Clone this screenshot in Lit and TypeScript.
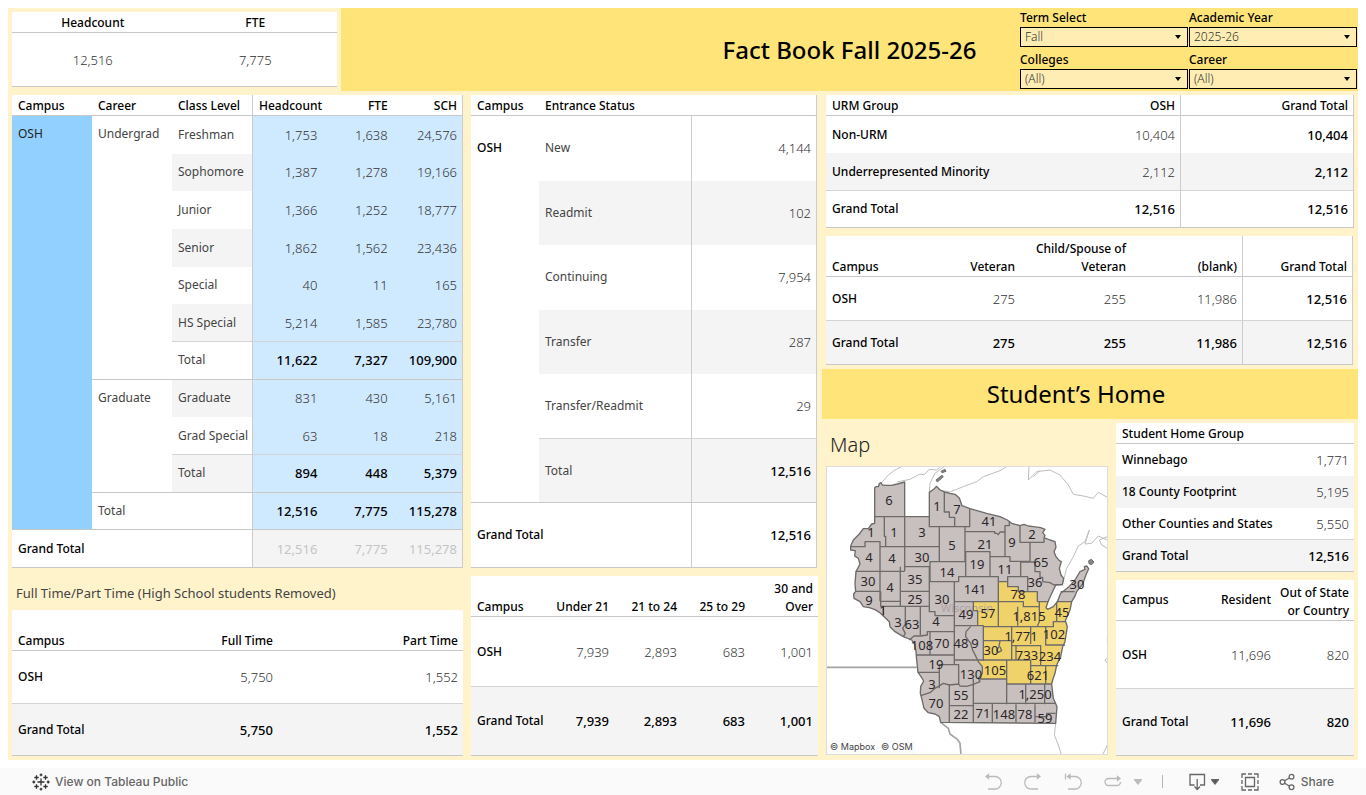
import { LitElement, html, svg, css } from "lit";
import { customElement } from "lit/decorators.js";

const tableStyles = css`
  :host { display: block; }
  * { box-sizing: border-box; }
  table {
    width: 100%;
    table-layout: fixed;
    border-collapse: separate;
    border-spacing: 0;
    background: #fff;
    font-size: 13px;
    line-height: 18px;
    color: #333;
    font-weight: 300;
  }
  th, td { padding: 0 5px 0 6px; text-align: right; vertical-align: middle; }
  th { font-size: 12px; font-weight: 500; color: #000; }
  thead th { vertical-align: bottom; border-bottom: 1px solid #c8c8c8; }
  .l { text-align: left; white-space: nowrap; }
  .c { text-align: center; }
  .light { font-weight: 400; color: #444; }
  .top { vertical-align: top; }
  .mid { vertical-align: middle; }
  .strong { font-weight: 500; color: #000; }
  .band { background: #f4f4f4; }
  .rule { border-bottom: 1px solid #d4d4d4; }
  .end { border-bottom: 1px solid #c8c8c8; }
  .bl { border-left: 1px solid #cccccc; }
  .br { border-right: 1px solid #cccccc; }
`;

@customElement("kpi-table")
class KpiTable extends LitElement {
  static styles = [tableStyles, css`
    thead tr { height: 21px; }
    tbody tr { height: 54px; }
    .c { padding: 0 6px 0 5px; }
  `];
  render() {
    return html`<table>
      <thead><tr><th class="c" scope="col">Headcount</th><th class="c" scope="col">FTE</th></tr></thead>
      <tbody><tr><td class="c end">12,516</td><td class="c end">7,775</td></tr></tbody>
    </table>`;
  }
}

interface LevelRow {
  label: string;
  values: string[];
  career?: string;
  span?: number;
  band?: boolean;
  total?: boolean;
  line?: string;
}

const levels: LevelRow[] = [
  { career: "Undergrad", span: 7, label: "Freshman", values: ["1,753", "1,638", "24,576"] },
  { label: "Sophomore", values: ["1,387", "1,278", "19,166"], band: true },
  { label: "Junior", values: ["1,366", "1,252", "18,777"] },
  { label: "Senior", values: ["1,862", "1,562", "23,436"], band: true },
  { label: "Special", values: ["40", "11", "165"] },
  { label: "HS Special", values: ["5,214", "1,585", "23,780"], band: true, line: "rule" },
  { label: "Total", values: ["11,622", "7,327", "109,900"], total: true, line: "end" },
  { career: "Graduate", span: 3, label: "Graduate", values: ["831", "430", "5,161"], band: true },
  { label: "Grad Special", values: ["63", "18", "218"], line: "rule" },
  { label: "Total", values: ["894", "448", "5,379"], band: true, total: true, line: "end" },
];

@customElement("level-table")
class LevelTable extends LitElement {
  static styles = [tableStyles, css`
    table { height: 473px; }
    col:nth-child(-n+3) { width: 80px; }
    thead tr { height: 21px; }
    tbody tr { height: 37px; }
    .campus { background: #92d0ff; color: #222; font-weight: 400; }
    .top { padding-top: 9px; }
    .m { background: #cfe9ff; }
    .faded { color: #c4c4c4; font-weight: 400; }
  `];
  render() {
    const cells = (v: string[], cls: string) =>
      v.map((x, i) => html`<td class="${cls} ${i === 0 ? "bl" : ""} ${i === 2 ? "br" : ""}">${x}</td>`);
    return html`<table>
      <colgroup><col /><col /><col /><col /><col /><col /></colgroup>
      <thead><tr>
        <th class="l" scope="col">Campus</th><th class="l" scope="col">Career</th><th class="l" scope="col">Class Level</th>
        <th class="bl" scope="col">Headcount</th><th scope="col">FTE</th><th class="br" scope="col">SCH</th>
      </tr></thead>
      <tbody>
        ${levels.map((r, i) => html`<tr>
          ${i === 0 ? html`<th class="l top campus end" scope="rowgroup" rowspan="11">OSH</th>` : ""}
          ${r.career ? html`<th class="l top light end" scope="rowgroup" rowspan=${r.span!}>${r.career}</th>` : ""}
          <th class="l light ${r.band ? "band" : ""} ${r.line ?? ""}" scope="row">${r.label}</th>
          ${cells(r.values, `m ${r.total ? "strong" : ""} ${r.line ?? ""}`)}
        </tr>`)}
        <tr><th class="l light end" scope="row" colspan="2">Total</th>${cells(["12,516", "7,775", "115,278"], "m strong end")}</tr>
        <tr><th class="l end" scope="row" colspan="3">Grand Total</th>${cells(["12,516", "7,775", "115,278"], "band faded end")}</tr>
      </tbody>
    </table>`;
  }
}

@customElement("entrance-table")
class EntranceTable extends LitElement {
  static styles = [tableStyles, css`
    :host { padding-right: 1px; }
    table { height: 473px; }
    col:nth-child(1) { width: 68px; }
    col:nth-child(2) { width: 152px; }
    thead tr { height: 21px; }
    tbody tr { height: 64px; }
    .top { padding-top: 23px; }
  `];
  render() {
    const rows: [string, string, string, string][] = [
      ["New", "4,144", "", ""],
      ["Readmit", "102", "band", ""],
      ["Continuing", "7,954", "", ""],
      ["Transfer", "287", "band", ""],
      ["Transfer/Readmit", "29", "rule", ""],
      ["Total", "12,516", "band end", "strong"],
    ];
    return html`<table>
      <colgroup><col /><col /><col /></colgroup>
      <thead><tr><th class="l" scope="col">Campus</th><th class="l" scope="col">Entrance Status</th><th class="br"></th></tr></thead>
      <tbody>
        ${rows.map((r, i) => html`<tr>
          ${i === 0 ? html`<th class="l top end" scope="rowgroup" rowspan="6">OSH</th>` : ""}
          <th class="l light ${r[2]}" scope="row">${r[0]}</th><td class="bl br ${r[2]} ${r[3]}">${r[1]}</td>
        </tr>`)}
        <tr><th class="l end" scope="row" colspan="2">Grand Total</th><td class="bl br end strong">12,516</td></tr>
      </tbody>
    </table>`;
  }
}

@customElement("status-table")
class StatusTable extends LitElement {
  static styles = [tableStyles, css`
    col:nth-child(1) { width: 81px; }
    thead tr { height: 41px; }
    tbody tr { height: 52px; }
    tbody tr:first-child { height: 53px; }
  `];
  render() {
    return html`<table>
      <colgroup><col /><col /><col /></colgroup>
      <thead><tr><th class="l" scope="col">Campus</th><th scope="col">Full Time</th><th scope="col">Part Time</th></tr></thead>
      <tbody>
        <tr><th class="l rule" scope="row">OSH</th><td class="rule">5,750</td><td class="rule">1,552</td></tr>
        <tr class="band"><th class="l end" scope="row">Grand Total</th><td class="end strong">5,750</td><td class="end strong">1,552</td></tr>
      </tbody>
    </table>`;
  }
}

@customElement("age-table")
class AgeTable extends LitElement {
  static styles = [tableStyles, css`
    col:nth-child(1) { width: 75px; }
    thead tr { height: 41px; }
    tbody tr { height: 70px; }
    tbody tr:last-child { height: 69px; }
  `];
  render() {
    return html`<table>
      <colgroup><col /><col /><col /><col /><col /></colgroup>
      <thead><tr><th class="l" scope="col">Campus</th><th scope="col">Under 21</th><th scope="col">21 to 24</th><th scope="col">25 to 29</th><th scope="col">30 and Over</th></tr></thead>
      <tbody>
        <tr><th class="l rule" scope="row">OSH</th>${["7,939", "2,893", "683", "1,001"].map((v) => html`<td class="rule">${v}</td>`)}</tr>
        <tr class="band"><th class="l end" scope="row">Grand Total</th>${["7,939", "2,893", "683", "1,001"].map((v) => html`<td class="end strong">${v}</td>`)}</tr>
      </tbody>
    </table>`;
  }
}

@customElement("urm-table")
class UrmTable extends LitElement {
  static styles = [tableStyles, css`
    col:nth-child(1) { width: 180px; }
    thead tr { height: 21px; }
    tbody tr { height: 37px; }
    tbody tr:nth-child(2) { height: 38px; }
  `];
  render() {
    return html`<table>
      <colgroup><col /><col /><col /></colgroup>
      <thead><tr><th class="l" scope="col">URM Group</th><th scope="col">OSH</th><th class="bl br" scope="col">Grand Total</th></tr></thead>
      <tbody>
        <tr><th class="l" scope="row">Non-URM</th><td>10,404</td><td class="bl br strong">10,404</td></tr>
        <tr class="band"><th class="l rule" scope="row">Underrepresented Minority</th><td class="rule">2,112</td><td class="bl br rule strong">2,112</td></tr>
        <tr><th class="l end" scope="row">Grand Total</th><td class="end strong">12,516</td><td class="bl br end strong">12,516</td></tr>
      </tbody>
    </table>`;
  }
}

@customElement("veteran-table")
class VeteranTable extends LitElement {
  static styles = [tableStyles, css`
    :host { padding-right: 1px; }
    col:nth-child(1) { width: 83px; }
    thead tr { height: 41px; }
    tbody tr { height: 44px; }
  `];
  render() {
    return html`<table>
      <colgroup><col /><col /><col /><col /><col /></colgroup>
      <thead><tr><th class="l" scope="col">Campus</th><th scope="col">Veteran</th><th scope="col">Child/Spouse of Veteran</th><th scope="col">(blank)</th><th class="bl br" scope="col">Grand Total</th></tr></thead>
      <tbody>
        <tr><th class="l rule" scope="row">OSH</th><td class="rule">275</td><td class="rule">255</td><td class="rule">11,986</td><td class="bl br rule strong">12,516</td></tr>
        <tr class="band"><th class="l end" scope="row">Grand Total</th><td class="end strong">275</td><td class="end strong">255</td><td class="end strong">11,986</td><td class="bl br end strong">12,516</td></tr>
      </tbody>
    </table>`;
  }
}

@customElement("home-table")
class HomeTable extends LitElement {
  static styles = [tableStyles, css`
    col:nth-child(2) { width: 72px; }
    thead tr { height: 21px; }
    tbody tr { height: 32px; }
  `];
  render() {
    return html`<table>
      <colgroup><col /><col /></colgroup>
      <thead><tr><th class="l" scope="col">Student Home Group</th><th></th></tr></thead>
      <tbody>
        <tr><th class="l" scope="row">Winnebago</th><td>1,771</td></tr>
        <tr class="band"><th class="l" scope="row">18 County Footprint</th><td>5,195</td></tr>
        <tr><th class="l rule" scope="row">Other Counties and States</th><td class="rule">5,550</td></tr>
        <tr class="band"><th class="l end" scope="row">Grand Total</th><td class="end strong">12,516</td></tr>
      </tbody>
    </table>`;
  }
}

@customElement("residency-table")
class ResidencyTable extends LitElement {
  static styles = [tableStyles, css`
    col:nth-child(1) { width: 82px; }
    thead tr { height: 41px; }
    tbody tr { height: 68px; }
    tbody tr:last-child { height: 67px; }
    thead th:last-child { padding-left: 0; }
  `];
  render() {
    return html`<table>
      <colgroup><col /><col /><col /></colgroup>
      <thead><tr><th class="l mid" scope="col">Campus</th><th class="mid" scope="col">Resident</th><th scope="col">Out of State or Country</th></tr></thead>
      <tbody>
        <tr><th class="l rule" scope="row">OSH</th><td class="rule">11,696</td><td class="rule">820</td></tr>
        <tr class="band"><th class="l end" scope="row">Grand Total</th><td class="end strong">11,696</td><td class="end strong">820</td></tr>
      </tbody>
    </table>`;
  }
}

const stateOutline =
  "M164,170V83L168,80L175,80L178,71L183,68L187,75L197,76L215,76L232,72L254,66V170H328V97L342,87L350,79L360,90L373,96L390,100L405,103L418,114L426,137L450,146L500,160L540,170L562,180L575,190L600,197L612,193L625,198L640,200L662,203L675,208L668,218L675,226L672,233L690,240L705,245L708,262L702,275L708,290L718,302L724,305L718,325L723,345L731,355L727,374L708,374L700,390L693,405L684,425L678,443L683,448L700,440L712,425L722,400L745,382L765,360L780,335L795,328L793,320L800,318L806,326L800,340L797,347L788,372L770,395L764,410L755,425L750,450L736,482L742,500L738,525L735,545L728,560L722,590L710,615L705,640L698,660L695,672L700,715L711,740L707,790L362,787L358,770L345,762L325,758L312,745L305,715L301,700L302,680L311,663L303,650L294,637L290,600L288,575L285,555L275,540L250,530L225,515L210,500L208,485L190,468L178,457L165,449L148,443L130,440L120,425L102,415L101,402L107,394L105,370L108,335L120,312L115,295L104,288L106,272L92,270V258L100,240L118,222L130,206L145,206L155,192L164,190Z";

const footprint =
  "M458,425H535V365H563V380H595V395H652V425H684L678,443L683,448L700,440L712,425H755L750,450L736,482L742,500L738,525L735,545L728,560L722,590L710,615L705,640L698,660L692,672H560V657H480L475,650L487,640V620L470,603H490V500H473V452H460Z";

const borders =
  "M164,170H254 M193,170V229H197V260 M254,170V333 M92,260H135V245H180V260H358 M180,260V424 M107,334H254 M254,320H328V394H241 M328,170V200H435 M404,200V172H388V156H373V96 M449,146V200H435V305 M358,200V305 M437,215H524V220H530L535,224L540,216H555V197H568V185 M555,215V290 M435,275H510V290H570V304H630V247 M600,197V247H672V235 M328,305H435 M330,305V365 M437,275V350 M330,365H416V350H535V365 M510,290V350 M602,304V350H563V380H595V395H652V425 M623,392V350H602 M602,306H645V335H660V352H668V365L690,368L702,375L727,374 M535,365V500 M535,365H563 M403,365V614 M403,425H610V440H658 M241,320V424H182 M107,394H180 M182,394V439H328 M241,394V439 M328,394V455H345V467H403 M190,439V468 M256,439V492L248,505L256,520L250,530 M301,439V525 M268,540L282,528H301L322,525V515H403 M330,515V585 M288,585H403 M294,637H358V614H416V675 M358,637V685 M460,425V452H473V497 M403,497H490V603 M452,500L438,515L437,530L452,550L458,570L468,590L475,605L487,620V640L475,655L480,665L460,673L440,679L420,678L416,672L388,675L370,670L345,685L330,698L302,707 M403,600H490 M388,672V787 M460,657V787 M388,737H460 M480,657H560V733 M490,500H677V555H735 M490,542H575V500 M490,600H588 M575,542V600 M540,542L537,560L530,570L535,577L545,572L540,560 M575,557H662V615 M632,500V552 M588,557V600 M560,600V657 M632,600V672 M560,672H695 M632,617H715 M677,617V672 M658,425V485L652,498 M593,440V497 M677,500H700V485H738 M710,425V485 M560,600H632 M460,730H707 M517,730V787 M588,733V787 M617,672V733 M674,672V733 M645,733V787 M645,770H680V760H707 M722,395H764 M652,425H684 M712,425H755";

const shores =
  "M185,68L205,45L225,30L245,20 M230,66L270,58L300,42L312,45L328,28L350,30L362,20 M328,97L330,70L345,40L372,20 M360,90L390,96L430,80L470,65L490,50L540,32L560,20 M627,20L625,60L650,35L690,30L720,45L745,75L760,103L790,108L820,115L835,97L862,112 M640,50L660,32 M862,265L845,255L838,240L862,230 M862,240L835,228L815,250L795,252L808,210L795,245L775,258L760,290L740,325L727,374 M862,530V545 M862,595L855,600L862,610 M707,790L703,825L715,855L725,887 M862,855L848,885";

const mapLabels: [number, number, string][] = [
  [63, 34, "6"], [111, 40, "1"], [131, 43, "7"], [163, 55, "41"], [45, 66, "1"], [68, 66, "1"], [96, 66, "3"],
  [126, 79, "5"], [159, 78, "21"], [186, 76, "9"], [206, 68, "2"], [215, 96, "65"], [43, 91, "4"], [66, 92, "4"],
  [96, 91, "30"], [151, 98, "19"], [179, 103, "11"], [121, 106, "14"], [42, 115, "30"], [64, 121, "4"], [89, 113, "35"],
  [149, 123, "141"], [209, 116, "36"], [251, 118, "30"], [43, 134, "9"], [89, 133, "25"], [116, 133, "30"],
  [192, 128, "78"], [57, 144, "1"], [72, 156, "3"], [86, 158, "63"], [110, 155, "4"], [140, 148, "49"], [162, 147, "57"],
  [203, 150, "1,815"], [236, 146, "45"], [96, 179, "108"], [116, 177, "70"], [135, 177, "48"], [149, 177, "9"],
  [195, 170, "1,771"], [228, 168, "102"], [165, 184, "30"], [201, 189, "733"], [224, 190, "234"], [110, 198, "19"],
  [145, 208, "130"], [169, 204, "105"], [212, 209, "621"], [106, 218, "3"], [110, 237, "70"], [135, 229, "55"],
  [209, 228, "1,250"], [135, 248, "22"], [157, 247, "71"], [178, 248, "148"], [199, 248, "78"], [219, 252, "59"],
];

@customElement("county-map")
class CountyMap extends LitElement {
  static styles = css`
    :host { display: block; position: relative; background: #fff; border: 1px solid #dcdcdc; }
    .map { display: block; width: 100%; }
    .label { font-family: "Noto Sans", sans-serif; font-size: 13px; font-weight: 400; fill: #2b2729; text-anchor: middle; }
    .place { font-family: "Noto Sans", sans-serif; font-size: 11px; fill: #aca2a2; text-anchor: middle; }
    .credits {
      position: absolute; left: 0; bottom: 0; display: flex; gap: 6px; padding: 0 2px 0 3px;
      background: #fbfbfb; font: 400 9px/14px Inter, "Liberation Sans", sans-serif;
    }
    .credits a { color: #444; text-decoration: none; }
  `;
  render() {
    return html`
      <svg class="map" viewBox="1 1 280 287" role="img" aria-label="Students by Wisconsin county">
        <g transform="translate(-6 -6) scale(0.33333)" fill="none" stroke-linejoin="round">
          <path d=${shores} stroke="#bdbdbd" stroke-width="3" />
          <path d="M20,622H290 M362,787L385,805L390,822L412,838L420,850L423,887" stroke="#a3a3a3" stroke-width="5" />
          <path d="M363,34L375,28L378,34L366,38Z M348,60L366,46L370,50L352,66Z M806,302L814,298L822,306L815,314L807,311Z" fill="#8a8585" stroke="#6b6b6b" stroke-width="3" />
          <path d=${stateOutline} fill="#c8bfbf" />
          <path d=${footprint} fill="#f0d26a" />
        </g>
        <text class="place" x="141" y="146">Wisconsin</text>
        <g transform="translate(-6 -6) scale(0.33333)" fill="none" stroke="#6d6b69" stroke-width="4" stroke-linejoin="round">
          <path d=${borders} />
          <path d=${stateOutline} />
        </g>
        ${mapLabels.map(([x, y, t]) => svg`<text class="label" x=${x} y=${y + 5}>${t}</text>`)}
      </svg>
      <div class="credits"><a href="#mapbox">© Mapbox</a><a href="#osm">© OSM</a></div>`;
  }
}

@customElement("filter-select")
class FilterSelect extends LitElement {
  static properties = { label: {}, value: {} };
  declare label: string;
  declare value: string;
  static styles = css`
    :host { display: block; }
    label { display: block; font-size: 12px; line-height: 18px; font-weight: 500; color: #000; }
    .box { position: relative; }
    .box::after {
      content: ""; position: absolute; right: 7px; top: 8px; pointer-events: none;
      border: 3px solid transparent; border-top: 4px solid #000; border-bottom: 0;
    }
    select {
      display: block; width: 100%; height: 20px; padding: 0 16px 0 4px; appearance: none; border: 1px solid #000; border-radius: 0;
      background: #ffedb3; color: #333; font: 300 12px/18px "Noto Sans", sans-serif;
    }
  `;
  render() {
    return html`<label for="s">${this.label}</label>
      <div class="box"><select id="s"><option>${this.value}</option></select></div>`;
  }
}

@customElement("viz-toolbar")
class VizToolbar extends LitElement {
  static styles = css`
    :host {
      display: flex; align-items: center; justify-content: space-between; height: 27px; padding: 0 32px;
      background: #fafafa; font-family: Inter, "Liberation Sans", sans-serif; font-size: 12px; line-height: 18px;
    }
    a, button {
      display: flex; align-items: center; gap: 5px; margin: 0; padding: 0; border: 0; background: none;
      color: #666; font: inherit; font-weight: 500; text-decoration: none;
    }
    svg { display: block; fill: none; stroke: #666; stroke-width: 1.3; }
    .logo { stroke: #333; }
    .off svg { stroke: #bbb; }
    .actions { display: flex; align-items: center; }
    .undo { margin-right: 22px; }
    .pause { margin-right: 20px; gap: 12px; }
    .sep { width: 1px; height: 13px; margin-right: 26px; background: #b5b5b5; }
    .download { margin-right: 22px; }
    .full { margin-right: 20px; }
  `;
  render() {
    const plus = (x: number, y: number, r: number) => `M${x - r},${y}H${x + r}M${x},${y - r}V${y + r}`;
    const logo = [plus(9, 9, 3.5), plus(4.5, 4.5, 2.2), plus(13.5, 4.5, 2.2), plus(4.5, 13.5, 2.2), plus(13.5, 13.5, 2.2), plus(9, 1.8, 1.4), plus(9, 16.2, 1.4), plus(1.8, 9, 1.4), plus(16.2, 9, 1.4)].join("");
    return html`
      <a href="#view"><svg class="logo" width="18" height="18" viewBox="0 0 18 18"><path d=${logo} /></svg>View on Tableau Public</a>
      <div class="actions">
        <button class="off undo" aria-label="Undo"><svg width="18" height="18" viewBox="0 0 18 18"><path d="M2,3.5H11A6,6 0 0 1 11,16H4" /><path d="M4.5,1.5L2,3.5L4.5,5.5Z" fill="#bbb" /></svg></button>
        <button class="off undo" aria-label="Redo"><svg width="18" height="18" viewBox="0 0 18 18"><path d="M16,3.5H7A6,6 0 0 0 7,16H14" /><path d="M13.5,1.5L16,3.5L13.5,5.5Z" fill="#bbb" /></svg></button>
        <button class="off undo" aria-label="Replay"><svg width="18" height="18" viewBox="0 0 18 18"><path d="M4,3.5H11A6,6 0 0 1 11,16H4M1.5,0.5V6.5" /><path d="M6,1.5L3.5,3.5L6,5.5Z" fill="#bbb" /></svg></button>
        <button class="off pause" aria-label="Refresh"><svg width="18" height="18" viewBox="0 0 18 18"><path d="M14,5.5H4.5A3.5,3.5 0 0 0 4.5,12.5H13A3.5,3.5 0 0 0 16.5,9" /><path d="M13.5,3.5L16,5.5L13.5,7.5Z" fill="#bbb" /></svg><svg width="8" height="6" viewBox="0 0 8 6"><path d="M0.5,0.5H7.5L4,5Z" fill="#bbb" /></svg></button>
        <span class="sep"></span>
        <button class="download" aria-label="Download"><svg width="17" height="18" viewBox="0 0 17 18"><path d="M5.5,12H1V1.5H15.5V12H11M8.2,6V16M5.5,13.5L8.2,16.5L11,13.5" /></svg><svg width="8" height="6" viewBox="0 0 8 6"><path d="M0.5,0.5H7.5L4,5Z" fill="#555" /></svg></button>
        <button class="full" aria-label="Full Screen"><svg width="18" height="18" viewBox="0 0 18 18"><path d="M4.5,4.5H13.5V13.5H4.5ZM1,5V1H5M7,1H11M13,1H17V5M17,7V11M17,13V17H13M11,17H7M5,17H1V13M1,11V7" /></svg></button>
        <button><svg width="17" height="18" viewBox="0 0 17 18"><circle cx="3.5" cy="9" r="2.4" /><circle cx="12.5" cy="3.8" r="2.4" /><circle cx="12.5" cy="14.2" r="2.4" /><path d="M5.6,7.8L10.4,5M5.6,10.2L10.4,13" /></svg>Share</button>
      </div>`;
  }
}

@customElement("app-root")
class AppRoot extends LitElement {
  static styles = css`
    :host { display: block; background: #fff; font-family: "Noto Sans", "Open Sans", sans-serif; color: #111; }
    * { box-sizing: border-box; }
    .dash { margin: 8px; background: #fff3cc; }
    .head { display: grid; grid-template-columns: 325fr 1017fr; gap: 4px; padding-left: 4px; }
    .kpi { padding-top: 4px; }
    .bar { display: grid; grid-template-columns: 1fr auto 1fr; align-items: center; background: #ffe47a; }
    h1, h2 { margin: 0; font-weight: 500; font-size: 24px; line-height: 32px; color: #000; }
    h1 { grid-column: 2; }
    h2 { font-weight: 400; }
    .filters { justify-self: end; display: grid; grid-template-columns: 168px 168px; gap: 4px 1px; padding: 1px 1px 2px 0; }
    .body { display: grid; grid-template-columns: 455fr 355fr 536fr; padding: 4px 0 4px 4px; }
    .col { display: flex; flex-direction: column; gap: 8px; }
    .first { padding-right: 4px; gap: 0; }
    .second { padding: 0 4px; }
    .third { gap: 0; }
    .caption { margin: 0; padding: 16px 4px 8px; font-size: 13px; line-height: 18px; font-weight: 400; color: #444; }
    .tables { display: grid; gap: 8px; padding: 0 4px; }
    .banner { margin: 4px 0; padding: 9px 28px 9px 0; background: #ffe47a; text-align: center; }
    .home { display: grid; grid-template-columns: 282fr 238fr; gap: 8px; padding: 0 4px; }
    h3 { margin: 0; padding: 8px 4px; font-size: 20px; line-height: 27px; font-weight: 300; color: #222; }
    .stack { display: grid; gap: 8px; align-content: start; }
  `;
  render() {
    return html`
      <main class="dash">
        <header class="head">
          <kpi-table class="kpi"></kpi-table>
          <div class="bar">
            <h1>Fact Book Fall 2025-26</h1>
            <div class="filters">
              <filter-select label="Term Select" value="Fall"></filter-select>
              <filter-select label="Academic Year" value="2025-26"></filter-select>
              <filter-select label="Colleges" value="(All)"></filter-select>
              <filter-select label="Career" value="(All)"></filter-select>
            </div>
          </div>
        </header>
        <div class="body">
          <section class="col first">
            <level-table></level-table>
            <p class="caption">Full Time/Part Time (High School students Removed)</p>
            <status-table></status-table>
          </section>
          <section class="col second">
            <entrance-table></entrance-table>
            <age-table></age-table>
          </section>
          <section class="col third">
            <div class="tables"><urm-table></urm-table><veteran-table></veteran-table></div>
            <div class="banner"><h2>Student’s Home</h2></div>
            <div class="home">
              <div><h3>Map</h3><county-map></county-map></div>
              <div class="stack"><home-table></home-table><residency-table></residency-table></div>
            </div>
          </section>
        </div>
      </main>
      <viz-toolbar></viz-toolbar>`;
  }
}
